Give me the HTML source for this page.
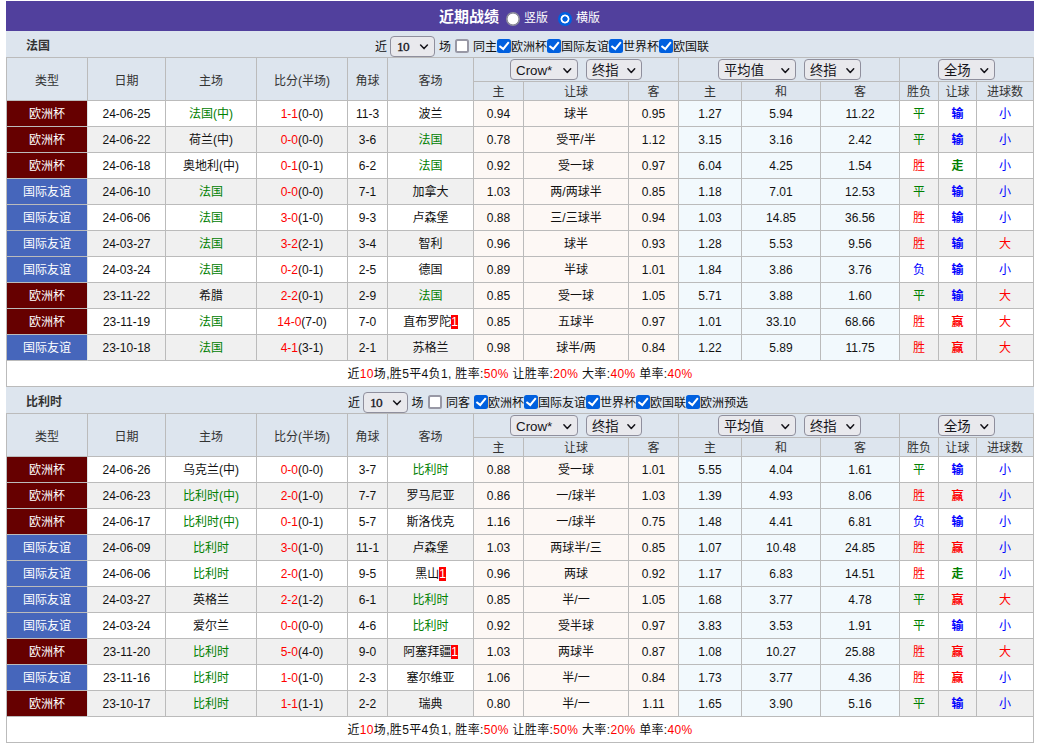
<!DOCTYPE html>
<html lang="zh-CN"><head><meta charset="utf-8"><title>近期战绩</title>
<style>
html,body{margin:0;padding:0;background:#fff;}
body{font-family:"Liberation Sans","Noto Sans CJK SC",sans-serif;font-size:12px;color:#111;width:1038px;height:745px;overflow:hidden;position:relative;}
#w{position:absolute;left:6px;top:1px;width:1028px;}
.title{height:30px;background:#51409d;color:#fff;position:relative;white-space:nowrap;}
.title .tt{position:absolute;left:433px;top:1px;line-height:30px;font-size:15px;font-weight:bold;}
.title .rl{position:absolute;top:1px;line-height:32px;}
.title .l1{left:518px;}
.title .l2{left:570px;}
.title input{appearance:none;-webkit-appearance:none;position:absolute;margin:0;width:14px;height:14px;border-radius:50%;top:11px;box-sizing:border-box;}
.title .r1{left:500px;background:radial-gradient(circle at center,#fff 0,#fff 5px,#8f8f9d 5.7px,#8f8f9d 100%);}
.title .r2{left:552px;background:radial-gradient(circle at center,#0060df 0,#0060df 2.3px,#fff 3px,#fff 4.1px,#0060df 4.8px,#0060df 100%);}
.th{height:26px;background:#dde5ee;position:relative;white-space:nowrap;}
.th .tn{position:absolute;left:20px;top:2px;line-height:26px;font-weight:bold;color:#333;}
.ctl{position:absolute;top:0;height:26px;display:flex;align-items:flex-start;}
.c1{left:369px;}
.c2{left:342px;}
.ctl .x{display:block;line-height:17px;margin-top:8px;}
.ctl .sel{margin:5px 4px 0 3px;}
.c2 .sel{margin-right:3.5px;}
.c2 .cb0{margin-left:4.5px;}
.ctl .m1{margin-left:0;}
.ctl .m2{margin-left:4px;}
.cb{appearance:none;-webkit-appearance:none;display:block;width:14px;height:14px;margin:8px 0 0 0;box-sizing:border-box;border-radius:2.5px;background:#0060df;position:relative;flex:none;}
.cb:after{content:"";position:absolute;left:0;top:0;width:14px;height:14px;background:#fff;clip-path:polygon(1.73px 7.75px,6.36px 11.40px,12.52px 3.79px,10.96px 2.53px,6.04px 8.60px,2.97px 6.18px);}
.cb0{background:#fff;border:2px solid #9898a5;margin-left:4px;}
.cb0:after{display:none;}
.c2 .cb1{margin-left:4px;}
.c2 .m2{margin-left:4px;}
.sel{display:inline-block;position:relative;height:21px;box-sizing:border-box;vertical-align:top;}
.sel select{appearance:none;-webkit-appearance:none;display:block;width:100%;height:21px;box-sizing:border-box;margin:0;border:1px solid #8f8f9d;border-radius:4px;background:#e9e9ed;color:#15141a;font-family:"Liberation Sans","Noto Sans CJK SC",sans-serif;font-size:13.333px;line-height:19px;padding:1px 0 0 5px;outline:none;}
.sel .cv{position:absolute;right:6px;top:8px;}
.s10 select{font-family:"Liberation Serif",serif;font-size:13.333px;letter-spacing:-0.8px;padding:0 0 0 6px;line-height:19px;-webkit-text-stroke:0.3px #15141a;}
table.t{border-collapse:separate;border-spacing:0;table-layout:fixed;width:1028px;border-top:1px solid #bbb;border-left:1px solid #bbb;}
table.t td{box-sizing:border-box;border-right:1px solid #bbb;border-bottom:1px solid #bbb;padding:0;text-align:center;overflow:hidden;white-space:nowrap;}
tr.h1 td{background:#dde5ee;height:24px;vertical-align:top;text-align:left;font-size:0;}
tr.h1 td[rowspan]{text-align:center;font-size:12px;color:#333;}
tr.h1 td.g1{padding-left:36px;}
tr.h1 td.g2{padding-left:39px;}
tr.h1 td.g3{padding-left:38px;}
tr.h1 td[rowspan]{height:43px;vertical-align:middle;}
tr.h1 .sel{margin-top:1px;}
tr.h2 td{color:#333;background:#dde5ee;height:19px;line-height:16px;padding-top:2px;}
tr.d td{height:26px;line-height:23px;padding-top:2px;}
tr.o td{background:#fff;}
tr.e td{background:#f0f0f0;}
tr.d td.p{background:#fdf8f5;}
tr.d td.q{background:#f2f9fd;}
tr.d td.ec{background:#660000;color:#fff;border-right-color:#dde3e3;}
tr.d td.fr{background:#4666bb;color:#fff;border-right-color:#dde3e3;}
tr.sum td{height:26px;line-height:23px;background:#fff;padding-top:2px;letter-spacing:0.35px;}
.r{color:#f00;}
.g{color:#008000;}
.b{color:#00f;}
.bd{font-weight:bold;}
.rc{background:#f00;color:#fff;}
.sA{width:68px;margin-right:8px;}
.sB2{width:57px;}
.sB{width:56px;}
.sC{width:78px;margin-right:8px;}
.sD{width:57px;}
.s10{width:45px;}

</style></head><body>
<div id="w">
<div class="title"><span class="tt">近期战绩</span><input type="radio" name="v" class="r1"><span class="rl l1">竖版</span><input type="radio" name="v" class="r2" checked><span class="rl l2">横版</span></div>
<div class="th">
<span class="tn">法国</span>
<span class="ctl c1"><span class="x">近</span><label class="sel s10"><select><option>10</option></select><svg class="cv" width="10" height="7" viewBox="0 0 10 7"><path d="M1.6 1 L5 4.6 L8.4 1" fill="none" stroke="#15141a" stroke-width="1.5" stroke-linecap="round" stroke-linejoin="round"/></svg></label><span class="x m1">场</span><input type="checkbox" class="cb cb0"><span class="x m2">同主</span>
<input type="checkbox" class="cb cb1" checked><span class="x">欧洲杯</span>
<input type="checkbox" class="cb cb2" checked><span class="x">国际友谊</span>
<input type="checkbox" class="cb cb3" checked><span class="x">世界杯</span>
<input type="checkbox" class="cb cb4" checked><span class="x">欧国联</span>
</span></div>
<table class="t" cellspacing="0" cellpadding="0"><colgroup><col style="width:81px"><col style="width:78px"><col style="width:91px"><col style="width:91px"><col style="width:40px"><col style="width:86px"><col style="width:50px"><col style="width:105px"><col style="width:50px"><col style="width:63px"><col style="width:79px"><col style="width:79px"><col style="width:39px"><col style="width:38px"><col style="width:57px"></colgroup>
<tr class="h1"><td rowspan="2">类型</td><td rowspan="2">日期</td><td rowspan="2">主场</td><td rowspan="2">比分(半场)</td><td rowspan="2">角球</td><td rowspan="2">客场</td><td colspan="3" class="g1"><label class="sel sA"><select><option>Crow*</option></select><svg class="cv" width="10" height="7" viewBox="0 0 10 7"><path d="M1.9 1.7 L5.3 5.4 L8.7 1.7" fill="none" stroke="#15141a" stroke-width="1.5" stroke-linecap="round" stroke-linejoin="round"/></svg></label><label class="sel sB"><select><option>终指</option></select><svg class="cv" width="10" height="7" viewBox="0 0 10 7"><path d="M1.9 1.7 L5.3 5.4 L8.7 1.7" fill="none" stroke="#15141a" stroke-width="1.5" stroke-linecap="round" stroke-linejoin="round"/></svg></label></td><td colspan="3" class="g2"><label class="sel sC"><select><option>平均值</option></select><svg class="cv" width="10" height="7" viewBox="0 0 10 7"><path d="M1.9 1.7 L5.3 5.4 L8.7 1.7" fill="none" stroke="#15141a" stroke-width="1.5" stroke-linecap="round" stroke-linejoin="round"/></svg></label><label class="sel sB2"><select><option>终指</option></select><svg class="cv" width="10" height="7" viewBox="0 0 10 7"><path d="M1.9 1.7 L5.3 5.4 L8.7 1.7" fill="none" stroke="#15141a" stroke-width="1.5" stroke-linecap="round" stroke-linejoin="round"/></svg></label></td><td colspan="3" class="g3"><label class="sel sD"><select><option>全场</option></select><svg class="cv" width="10" height="7" viewBox="0 0 10 7"><path d="M1.9 1.7 L5.3 5.4 L8.7 1.7" fill="none" stroke="#15141a" stroke-width="1.5" stroke-linecap="round" stroke-linejoin="round"/></svg></label></td></tr>
<tr class="h2"><td>主</td><td>让球</td><td>客</td><td>主</td><td>和</td><td>客</td><td>胜负</td><td>让球</td><td>进球数</td></tr>
<tr class="d o"><td class="ec">欧洲杯</td><td>24-06-25</td><td class="g">法国(中)</td><td><span class="r">1-1</span>(0-0)</td><td>11-3</td><td>波兰</td><td class="p">0.94</td><td class="p">球半</td><td class="p">0.95</td><td class="q">1.27</td><td class="q">5.94</td><td class="q">11.22</td><td class="g">平</td><td class="b bd">输</td><td class="b">小</td></tr>
<tr class="d e"><td class="ec">欧洲杯</td><td>24-06-22</td><td>荷兰(中)</td><td><span class="r">0-0</span>(0-0)</td><td>3-6</td><td class="g">法国</td><td class="p">0.78</td><td class="p">受平/半</td><td class="p">1.12</td><td class="q">3.15</td><td class="q">3.16</td><td class="q">2.42</td><td class="g">平</td><td class="b bd">输</td><td class="b">小</td></tr>
<tr class="d o"><td class="ec">欧洲杯</td><td>24-06-18</td><td>奥地利(中)</td><td><span class="r">0-1</span>(0-1)</td><td>6-2</td><td class="g">法国</td><td class="p">0.92</td><td class="p">受一球</td><td class="p">0.97</td><td class="q">6.04</td><td class="q">4.25</td><td class="q">1.54</td><td class="r">胜</td><td class="g bd">走</td><td class="b">小</td></tr>
<tr class="d e"><td class="fr">国际友谊</td><td>24-06-10</td><td class="g">法国</td><td><span class="r">0-0</span>(0-0)</td><td>7-1</td><td>加拿大</td><td class="p">1.03</td><td class="p">两/两球半</td><td class="p">0.85</td><td class="q">1.18</td><td class="q">7.01</td><td class="q">12.53</td><td class="g">平</td><td class="b bd">输</td><td class="b">小</td></tr>
<tr class="d o"><td class="fr">国际友谊</td><td>24-06-06</td><td class="g">法国</td><td><span class="r">3-0</span>(1-0)</td><td>9-3</td><td>卢森堡</td><td class="p">0.88</td><td class="p">三/三球半</td><td class="p">0.94</td><td class="q">1.03</td><td class="q">14.85</td><td class="q">36.56</td><td class="r">胜</td><td class="b bd">输</td><td class="b">小</td></tr>
<tr class="d e"><td class="fr">国际友谊</td><td>24-03-27</td><td class="g">法国</td><td><span class="r">3-2</span>(2-1)</td><td>3-4</td><td>智利</td><td class="p">0.96</td><td class="p">球半</td><td class="p">0.93</td><td class="q">1.28</td><td class="q">5.53</td><td class="q">9.56</td><td class="r">胜</td><td class="b bd">输</td><td class="r">大</td></tr>
<tr class="d o"><td class="fr">国际友谊</td><td>24-03-24</td><td class="g">法国</td><td><span class="r">0-2</span>(0-1)</td><td>2-5</td><td>德国</td><td class="p">0.89</td><td class="p">半球</td><td class="p">1.01</td><td class="q">1.84</td><td class="q">3.86</td><td class="q">3.76</td><td class="b">负</td><td class="b bd">输</td><td class="b">小</td></tr>
<tr class="d e"><td class="ec">欧洲杯</td><td>23-11-22</td><td>希腊</td><td><span class="r">2-2</span>(0-1)</td><td>2-9</td><td class="g">法国</td><td class="p">0.85</td><td class="p">受一球</td><td class="p">1.05</td><td class="q">5.71</td><td class="q">3.88</td><td class="q">1.60</td><td class="g">平</td><td class="b bd">输</td><td class="r">大</td></tr>
<tr class="d o"><td class="ec">欧洲杯</td><td>23-11-19</td><td class="g">法国</td><td><span class="r">14-0</span>(7-0)</td><td>7-0</td><td>直布罗陀<span class="rc">1</span></td><td class="p">0.85</td><td class="p">五球半</td><td class="p">0.97</td><td class="q">1.01</td><td class="q">33.10</td><td class="q">68.66</td><td class="r">胜</td><td class="r bd">赢</td><td class="r">大</td></tr>
<tr class="d e"><td class="fr">国际友谊</td><td>23-10-18</td><td class="g">法国</td><td><span class="r">4-1</span>(3-1)</td><td>2-1</td><td>苏格兰</td><td class="p">0.98</td><td class="p">球半/两</td><td class="p">0.84</td><td class="q">1.22</td><td class="q">5.89</td><td class="q">11.75</td><td class="r">胜</td><td class="r bd">赢</td><td class="r">大</td></tr>
<tr class="sum"><td colspan="15">近<span class="r">10</span>场,胜5平4负1, 胜率:<span class="r">50%</span> 让胜率:<span class="r">20%</span> 大率:<span class="r">40%</span> 单率:<span class="r">40%</span></td></tr>
</table>
<div class="th">
<span class="tn">比利时</span>
<span class="ctl c2"><span class="x">近</span><label class="sel s10"><select><option>10</option></select><svg class="cv" width="10" height="7" viewBox="0 0 10 7"><path d="M1.6 1 L5 4.6 L8.4 1" fill="none" stroke="#15141a" stroke-width="1.5" stroke-linecap="round" stroke-linejoin="round"/></svg></label><span class="x m1">场</span><input type="checkbox" class="cb cb0"><span class="x m2">同客</span>
<input type="checkbox" class="cb cb1" checked><span class="x">欧洲杯</span>
<input type="checkbox" class="cb cb2" checked><span class="x">国际友谊</span>
<input type="checkbox" class="cb cb3" checked><span class="x">世界杯</span>
<input type="checkbox" class="cb cb4" checked><span class="x">欧国联</span>
<input type="checkbox" class="cb cb5" checked><span class="x">欧洲预选</span>
</span></div>
<table class="t" cellspacing="0" cellpadding="0"><colgroup><col style="width:81px"><col style="width:78px"><col style="width:91px"><col style="width:91px"><col style="width:40px"><col style="width:86px"><col style="width:50px"><col style="width:105px"><col style="width:50px"><col style="width:63px"><col style="width:79px"><col style="width:79px"><col style="width:39px"><col style="width:38px"><col style="width:57px"></colgroup>
<tr class="h1"><td rowspan="2">类型</td><td rowspan="2">日期</td><td rowspan="2">主场</td><td rowspan="2">比分(半场)</td><td rowspan="2">角球</td><td rowspan="2">客场</td><td colspan="3" class="g1"><label class="sel sA"><select><option>Crow*</option></select><svg class="cv" width="10" height="7" viewBox="0 0 10 7"><path d="M1.9 1.7 L5.3 5.4 L8.7 1.7" fill="none" stroke="#15141a" stroke-width="1.5" stroke-linecap="round" stroke-linejoin="round"/></svg></label><label class="sel sB"><select><option>终指</option></select><svg class="cv" width="10" height="7" viewBox="0 0 10 7"><path d="M1.9 1.7 L5.3 5.4 L8.7 1.7" fill="none" stroke="#15141a" stroke-width="1.5" stroke-linecap="round" stroke-linejoin="round"/></svg></label></td><td colspan="3" class="g2"><label class="sel sC"><select><option>平均值</option></select><svg class="cv" width="10" height="7" viewBox="0 0 10 7"><path d="M1.9 1.7 L5.3 5.4 L8.7 1.7" fill="none" stroke="#15141a" stroke-width="1.5" stroke-linecap="round" stroke-linejoin="round"/></svg></label><label class="sel sB2"><select><option>终指</option></select><svg class="cv" width="10" height="7" viewBox="0 0 10 7"><path d="M1.9 1.7 L5.3 5.4 L8.7 1.7" fill="none" stroke="#15141a" stroke-width="1.5" stroke-linecap="round" stroke-linejoin="round"/></svg></label></td><td colspan="3" class="g3"><label class="sel sD"><select><option>全场</option></select><svg class="cv" width="10" height="7" viewBox="0 0 10 7"><path d="M1.9 1.7 L5.3 5.4 L8.7 1.7" fill="none" stroke="#15141a" stroke-width="1.5" stroke-linecap="round" stroke-linejoin="round"/></svg></label></td></tr>
<tr class="h2"><td>主</td><td>让球</td><td>客</td><td>主</td><td>和</td><td>客</td><td>胜负</td><td>让球</td><td>进球数</td></tr>
<tr class="d o"><td class="ec">欧洲杯</td><td>24-06-26</td><td>乌克兰(中)</td><td><span class="r">0-0</span>(0-0)</td><td>3-7</td><td class="g">比利时</td><td class="p">0.88</td><td class="p">受一球</td><td class="p">1.01</td><td class="q">5.55</td><td class="q">4.04</td><td class="q">1.61</td><td class="g">平</td><td class="b bd">输</td><td class="b">小</td></tr>
<tr class="d e"><td class="ec">欧洲杯</td><td>24-06-23</td><td class="g">比利时(中)</td><td><span class="r">2-0</span>(1-0)</td><td>7-7</td><td>罗马尼亚</td><td class="p">0.86</td><td class="p">一/球半</td><td class="p">1.03</td><td class="q">1.39</td><td class="q">4.93</td><td class="q">8.06</td><td class="r">胜</td><td class="r bd">赢</td><td class="b">小</td></tr>
<tr class="d o"><td class="ec">欧洲杯</td><td>24-06-17</td><td class="g">比利时(中)</td><td><span class="r">0-1</span>(0-1)</td><td>5-7</td><td>斯洛伐克</td><td class="p">1.16</td><td class="p">一/球半</td><td class="p">0.75</td><td class="q">1.48</td><td class="q">4.41</td><td class="q">6.81</td><td class="b">负</td><td class="b bd">输</td><td class="b">小</td></tr>
<tr class="d e"><td class="fr">国际友谊</td><td>24-06-09</td><td class="g">比利时</td><td><span class="r">3-0</span>(1-0)</td><td>11-1</td><td>卢森堡</td><td class="p">1.03</td><td class="p">两球半/三</td><td class="p">0.85</td><td class="q">1.07</td><td class="q">10.48</td><td class="q">24.85</td><td class="r">胜</td><td class="r bd">赢</td><td class="b">小</td></tr>
<tr class="d o"><td class="fr">国际友谊</td><td>24-06-06</td><td class="g">比利时</td><td><span class="r">2-0</span>(1-0)</td><td>9-5</td><td>黑山<span class="rc">1</span></td><td class="p">0.96</td><td class="p">两球</td><td class="p">0.92</td><td class="q">1.17</td><td class="q">6.83</td><td class="q">14.51</td><td class="r">胜</td><td class="g bd">走</td><td class="b">小</td></tr>
<tr class="d e"><td class="fr">国际友谊</td><td>24-03-27</td><td>英格兰</td><td><span class="r">2-2</span>(1-2)</td><td>6-1</td><td class="g">比利时</td><td class="p">0.85</td><td class="p">半/一</td><td class="p">1.05</td><td class="q">1.68</td><td class="q">3.77</td><td class="q">4.78</td><td class="g">平</td><td class="r bd">赢</td><td class="r">大</td></tr>
<tr class="d o"><td class="fr">国际友谊</td><td>24-03-24</td><td>爱尔兰</td><td><span class="r">0-0</span>(0-0)</td><td>4-6</td><td class="g">比利时</td><td class="p">0.92</td><td class="p">受半球</td><td class="p">0.97</td><td class="q">3.83</td><td class="q">3.53</td><td class="q">1.91</td><td class="g">平</td><td class="b bd">输</td><td class="b">小</td></tr>
<tr class="d e"><td class="ec">欧洲杯</td><td>23-11-20</td><td class="g">比利时</td><td><span class="r">5-0</span>(4-0)</td><td>9-0</td><td>阿塞拜疆<span class="rc">1</span></td><td class="p">1.03</td><td class="p">两球半</td><td class="p">0.87</td><td class="q">1.08</td><td class="q">10.27</td><td class="q">25.88</td><td class="r">胜</td><td class="r bd">赢</td><td class="r">大</td></tr>
<tr class="d o"><td class="fr">国际友谊</td><td>23-11-16</td><td class="g">比利时</td><td><span class="r">1-0</span>(1-0)</td><td>2-3</td><td>塞尔维亚</td><td class="p">1.06</td><td class="p">半/一</td><td class="p">0.84</td><td class="q">1.73</td><td class="q">3.77</td><td class="q">4.36</td><td class="r">胜</td><td class="r bd">赢</td><td class="b">小</td></tr>
<tr class="d e"><td class="ec">欧洲杯</td><td>23-10-17</td><td class="g">比利时</td><td><span class="r">1-1</span>(1-1)</td><td>2-2</td><td>瑞典</td><td class="p">0.80</td><td class="p">半/一</td><td class="p">1.11</td><td class="q">1.65</td><td class="q">3.90</td><td class="q">5.16</td><td class="g">平</td><td class="b bd">输</td><td class="b">小</td></tr>
<tr class="sum"><td colspan="15">近<span class="r">10</span>场,胜5平4负1, 胜率:<span class="r">50%</span> 让胜率:<span class="r">50%</span> 大率:<span class="r">20%</span> 单率:<span class="r">40%</span></td></tr>
</table>
</div>
</body></html>
